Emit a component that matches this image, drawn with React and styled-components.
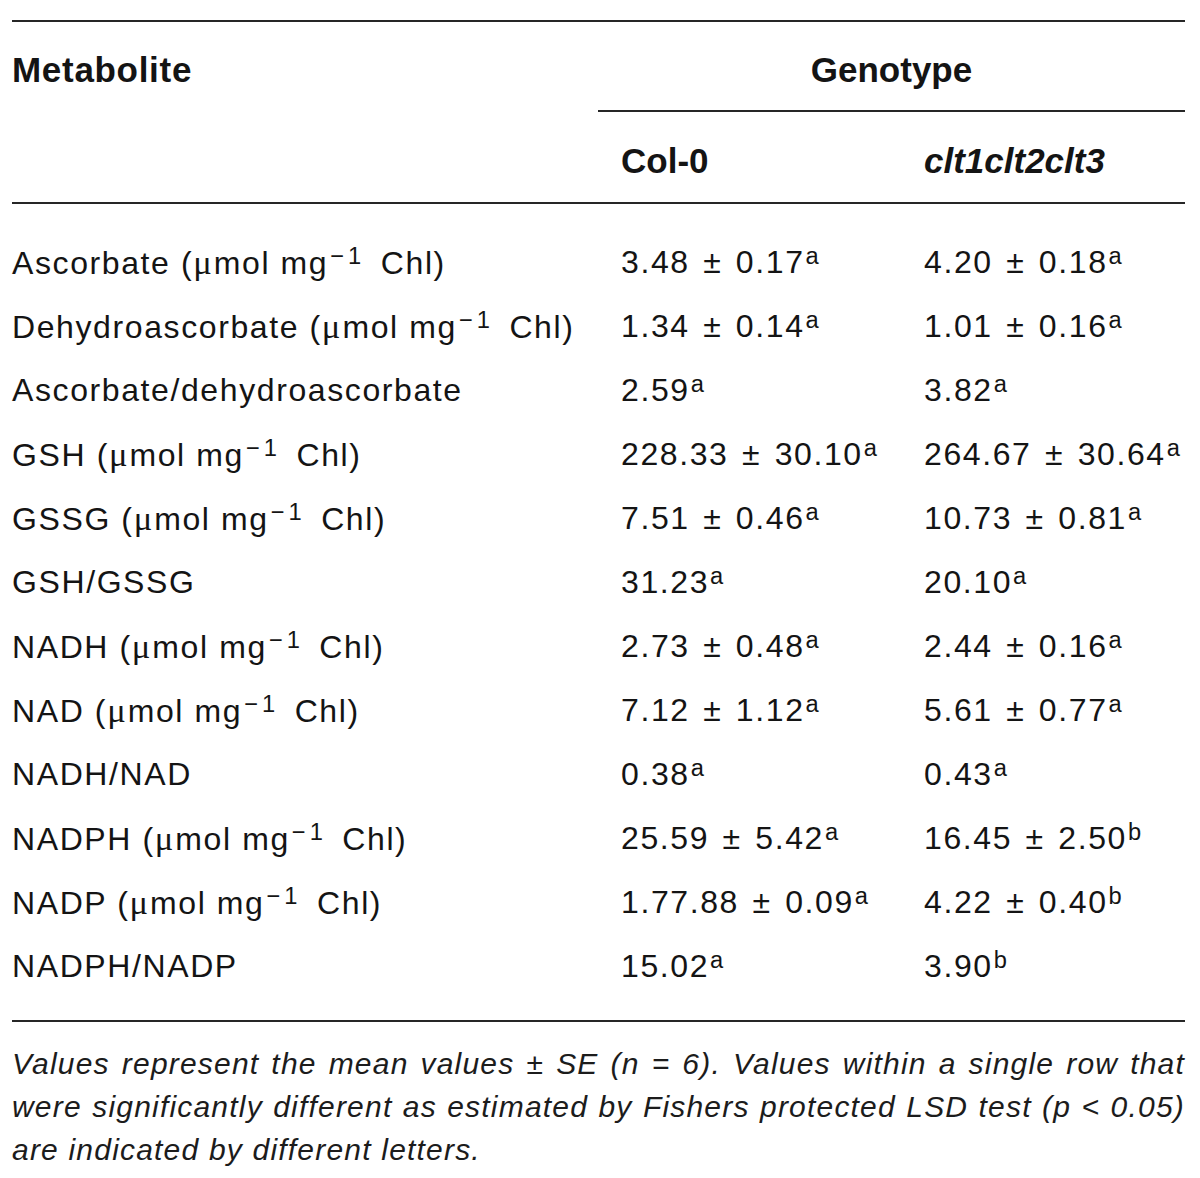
import styled, { createGlobalStyle } from 'styled-components';

const GlobalStyle = createGlobalStyle`
  html, body {
    margin: 0;
    padding: 0;
    background: #ffffff;
  }
  body {
    font-family: "Liberation Sans", Arial, sans-serif;
    color: #141414;
  }
`;

const rows = [
  { name: 'Ascorbate', unit: true, col: '3.48 ± 0.17', colSup: 'a', mut: '4.20 ± 0.18', mutSup: 'a' },
  { name: 'Dehydroascorbate', unit: true, col: '1.34 ± 0.14', colSup: 'a', mut: '1.01 ± 0.16', mutSup: 'a' },
  { name: 'Ascorbate/dehydroascorbate', col: '2.59', colSup: 'a', mut: '3.82', mutSup: 'a' },
  { name: 'GSH', unit: true, col: '228.33 ± 30.10', colSup: 'a', mut: '264.67 ± 30.64', mutSup: 'a' },
  { name: 'GSSG', unit: true, col: '7.51 ± 0.46', colSup: 'a', mut: '10.73 ± 0.81', mutSup: 'a' },
  { name: 'GSH/GSSG', col: '31.23', colSup: 'a', mut: '20.10', mutSup: 'a' },
  { name: 'NADH', unit: true, col: '2.73 ± 0.48', colSup: 'a', mut: '2.44 ± 0.16', mutSup: 'a' },
  { name: 'NAD', unit: true, col: '7.12 ± 1.12', colSup: 'a', mut: '5.61 ± 0.77', mutSup: 'a' },
  { name: 'NADH/NAD', col: '0.38', colSup: 'a', mut: '0.43', mutSup: 'a' },
  { name: 'NADPH', unit: true, col: '25.59 ± 5.42', colSup: 'a', mut: '16.45 ± 2.50', mutSup: 'b' },
  { name: 'NADP', unit: true, col: '1.77.88 ± 0.09', colSup: 'a', mut: '4.22 ± 0.40', mutSup: 'b' },
  { name: 'NADPH/NADP', col: '15.02', colSup: 'a', mut: '3.90', mutSup: 'b' },
];

const Page = styled.div`
  width: 1173px;
  padding: 20px 15px 30px 12px;
`;

const Rule = styled.div`
  height: 2px;
  background: #262626;
  margin-left: ${(p) => p.$indent || 0}px;
`;

const HeadRow = styled.div`
  display: grid;
  grid-template-columns: ${(p) => p.$cols};
  padding-top: ${(p) => p.$top}px;
  padding-bottom: ${(p) => p.$bottom}px;
  font-weight: 700;
  font-size: 35px;
  line-height: 40px;
`;

const HeadCell = styled.div`
  padding-left: ${(p) => p.$pad || 0}px;
  text-align: ${(p) => (p.$center ? 'center' : 'left')};
  font-style: ${(p) => (p.$italic ? 'italic' : 'normal')};
  letter-spacing: ${(p) => p.$track || 0}px;
  white-space: nowrap;
`;

const Body = styled.div`
  padding: 26px 0 22px;
`;

const Row = styled.div`
  display: grid;
  grid-template-columns: 586px 303px 284px;
  height: 64px;
  line-height: 64px;
  font-size: 32px;
  letter-spacing: 1.6px;
  white-space: nowrap;
`;

const Cell = styled.div`
  padding-left: ${(p) => p.$pad || 0}px;
`;

const Pm = styled.span`
  margin: 0 3px;
`;

const Mu = styled.span`
  font-family: "Liberation Serif", "Times New Roman", serif;
  font-size: 1.08em;
  letter-spacing: 0;
  margin-right: 2px;
`;

const Sup = styled.sup`
  font-size: 0.74em;
  line-height: 0;
  vertical-align: 0.4em;
  letter-spacing: 0.5px;
  margin-left: 1px;
`;

const Power = styled.sup`
  font-size: 0.74em;
  line-height: 0;
  vertical-align: 0.42em;
  letter-spacing: 4px;
  margin: 0 5px 0 2px;
`;

const Note = styled.p`
  margin: 0;
  padding-top: 20px;
  font-style: italic;
  font-size: 30px;
  line-height: 43px;
  letter-spacing: 1.2px;
  text-align: justify;
  color: #1c1c1c;
`;

const Unit = () => (
  <>
    {' ('}
    <Mu>μ</Mu>
    {'mol mg'}
    <Power>−1</Power>
    {' Chl)'}
  </>
);

const Value = ({ text, sup }) => {
  const parts = text.split(' ± ');
  return (
    <>
      {parts[0]}
      {parts[1] && (
        <>
          {' '}
          <Pm>±</Pm>
          {' '}
          {parts[1]}
        </>
      )}
      <Sup>{sup}</Sup>
    </>
  );
};

export default function App() {
  return (
    <>
      <GlobalStyle />
      <Page>
        <Rule />
        <HeadRow $cols="586px 1fr" $top={28} $bottom={20}>
          <HeadCell $track={0.7}>Metabolite</HeadCell>
          <HeadCell $center>Genotype</HeadCell>
        </HeadRow>
        <Rule $indent={586} />
        <HeadRow $cols="586px 303px 284px" $top={29} $bottom={21}>
          <HeadCell />
          <HeadCell $pad={23}>Col-0</HeadCell>
          <HeadCell $pad={23} $italic>clt1clt2clt3</HeadCell>
        </HeadRow>
        <Rule />
        <Body>
          {rows.map((r) => (
            <Row key={r.name}>
              <Cell>
                {r.name}
                {r.unit && <Unit />}
              </Cell>
              <Cell $pad={23}>
                <Value text={r.col} sup={r.colSup} />
              </Cell>
              <Cell $pad={23}>
                <Value text={r.mut} sup={r.mutSup} />
              </Cell>
            </Row>
          ))}
        </Body>
        <Rule />
        <Note>
          Values represent the mean values ± SE (n = 6). Values within a single row that
          were significantly different as estimated by Fishers protected LSD test (p &lt; 0.05)
          are indicated by different letters.
        </Note>
      </Page>
    </>
  );
}
